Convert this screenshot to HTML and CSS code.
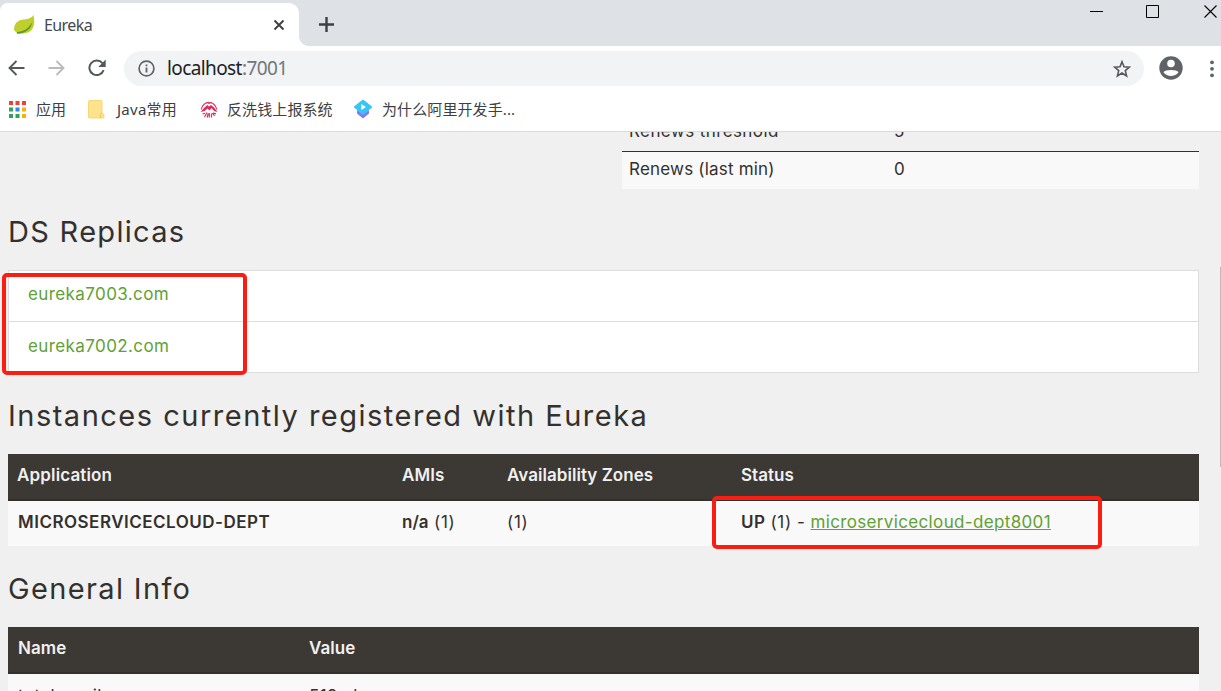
FILE: index.html
```html
<!DOCTYPE html>
<html lang="zh-CN">
<head>
<meta charset="utf-8">
<title>Eureka</title>
<link rel="stylesheet" href="styles.css">
</head>
<body>
<div class="window">
  <header class="tabstrip">
    <div class="tab">
      <svg class="leaf" width="22" height="20" viewBox="0 0 22 20"><path d="M0 15C0 8 4 5 10 4.500C15 4 18 2.500 19.500 0C21 6 20.500 13 16.500 16C13 18.800 6 19 3 18Z" fill="#bfd02c"/><path d="M3 17C9 17 15 13.500 18.500 6.500C17.500 13.500 12 18.500 3 18.800Z" fill="#5a9a32"/></svg>
      <span class="tab-title">Eureka</span>
      <svg class="tab-close" width="12" height="12" viewBox="0 0 12 12"><path d="M1.500 1.500L10.500 10.500M10.500 1.500L1.500 10.500" stroke="#3c4043" stroke-width="1.900"/></svg>
    </div>
    <div class="new-tab">
      <svg width="15" height="15" viewBox="0 0 15 15"><path d="M7.500 0V15M0 7.500H15" stroke="#3c4043" stroke-width="2.400"/></svg>
    </div>
    <div class="controls">
      <svg width="13" height="14" viewBox="0 0 13 14"><path d="M0 6.500H13" stroke="#000"/></svg>
      <svg width="13" height="14" viewBox="0 0 13 14"><path d="M.500 .500H12.500V12.500H.500Z" fill="none" stroke="#000"/></svg>
      <svg class="win-close" width="13" height="14" viewBox="0 0 13 14"><path d="M.500 .500L12.500 12.500M12.500 .500L.500 12.500" stroke="#000" stroke-width="1.100"/></svg>
    </div>
  </header>

  <div class="toolbar">
    <svg class="back" width="17" height="16" viewBox="0 0 17 16"><path d="M16.500 8H2M8.500 1L1.500 8L8.500 15" fill="none" stroke="#54585d" stroke-width="1.900"/></svg>
    <svg class="forward" width="17" height="16" viewBox="0 0 17 16"><path d="M.500 8H15M8.500 1L15.500 8L8.500 15" fill="none" stroke="#b9bbbe" stroke-width="1.900"/></svg>
    <svg class="reload" width="18" height="18" viewBox="0 0 18 18"><path d="M15.600 11.200A7.300 7.300 0 1 1 14.400 4.200" fill="none" stroke="#54585d" stroke-width="2"/><path d="M17.700 .600V8H10.300Z" fill="#54585d"/></svg>
    <div class="omnibox">
      <svg width="17" height="17" viewBox="0 0 17 17"><circle cx="8.500" cy="8.500" r="7.400" fill="none" stroke="#5f6368" stroke-width="1.700"/><path d="M8.500 7.500V12.500M8.500 4.400V6.200" stroke="#5f6368" stroke-width="1.800"/></svg>
      <div class="url"><span class="host">localhost</span>:7001</div>
      <svg class="star" width="18" height="18" viewBox="0 0 18 18"><path d="M9 1.700L11 6.700L16.400 7.100L12.300 10.600L13.600 15.900L9 13L4.400 15.900L5.700 10.600L1.600 7.100L7 6.700Z" fill="none" stroke="#54585d" stroke-width="1.600"/></svg>
    </div>
    <svg class="avatar" width="24" height="24" viewBox="0 0 24 24"><circle cx="12" cy="12" r="11.700" fill="#5f6368"/><circle cx="12" cy="7.500" r="3.800" fill="#fff"/><path d="M4.500 16.200C6 13.300 18 13.300 19.500 16.200C16 21.200 8 21.200 4.500 16.200Z" fill="#fff"/></svg>
    <svg class="menu" width="4" height="18" viewBox="0 0 4 18"><g fill="#5f6368"><circle cx="2" cy="2.300" r="1.900"/><circle cx="2" cy="8.800" r="1.900"/><circle cx="2" cy="15.300" r="1.900"/></g></svg>
  </div>

  <nav class="bookmarks">
    <svg class="apps" width="17" height="17" viewBox="0 0 17 17"><g fill="#ee4135"><path d="M0 0h4v4H0zM6.500 0h4v4h-4zM13 0h4v4h-4z"/></g><path fill="#34a05a" d="M0 6.500h4v4H0zM0 13h4v4H0zM6.500 13h4v4h-4z"/><path fill="#2a85f0" d="M6.500 6.500h4v4h-4z"/><path fill="#fbb00c" d="M13 6.500h4v4h-4zM13 13h4v4h-4z"/></svg>
    <span class="mark mark-apps">应用</span>
    <svg class="folder" width="17" height="19" viewBox="0 0 17 19"><path d="M1.500 .500H13Q14 .500 14 1.500V13Q16.500 13.500 16 18H1.500Q.500 18 .500 17V1.500Q.500 .500 1.500 .500Z" fill="#fde38c" stroke="#f5d876"/><path d="M12.500 18Q11.500 13 14 13" fill="none" stroke="#edc64a"/></svg>
    <span class="mark mark-java">Java常用</span>
    <svg class="seal" width="18" height="18" viewBox="0 0 18 18"><path d="M1.300 9.500A7.800 8.600 0 0 1 16.700 9.500" fill="none" stroke="#dc2c5b" stroke-width="1.200"/><path d="M4 4.200L7 2.800L9 3.800L11 2.800L14 4.200" fill="none" stroke="#e0567b" stroke-width="1"/><path d="M.500 12L4.500 7.500L7.500 5L9 6.500L11 5L14 7.500L17.500 12L14 11L11.500 8L9.500 10.500L7.500 8.500L4.500 11Z" fill="#dc2c5b"/><path d="M4.500 17L7 12.500M7.200 17.500L8.200 13.500M9.300 13V17.500M11.500 17.500V13.500M12.500 13L14.500 16M2.500 14L5 13.200M13 13.200L16 13.800" stroke="#dc2c5b" stroke-width="1.200"/></svg>
    <span class="mark mark-report">反洗钱上报系统</span>
    <svg class="diamond" width="20" height="20" viewBox="0 0 20 20"><path d="M4 11L10 15L16 11V14.500L10 19.500L4 14.500Z" fill="#7d7cf4"/><path d="M10 .500L14 3.500L19.500 8L10 16L.500 8L6 3.500Z" fill="#38c4f5"/><path d="M8.300 5L13 8L8.300 11Z" fill="#fff"/></svg>
    <span class="mark mark-ali">为什么阿里开发手...</span>
  </nav>

  <main class="page">
    <div class="stats">
      <div class="stat-row cut"><span class="threshold">Renews threshold</span><span>5</span></div>
      <div class="stat-row"><span class="last-min">Renews (last min)</span><span>0</span></div>
    </div>

    <h1 class="ds">DS Replicas</h1>
    <div class="replica-wrap">
      <ul class="replicas">
        <li><a>eureka7003.com</a></li>
        <li><a>eureka7002.com</a></li>
      </ul>
      <div class="marker marker-replicas"></div>
    </div>

    <h1 class="instances">Instances currently registered with Eureka</h1>
    <div class="table">
      <div class="row head apps-cols"><b class="t-app">Application</b><b>AMIs</b><b>Availability Zones</b><b>Status</b></div>
      <div class="row apps-cols"><b class="t-name">MICROSERVICECLOUD-DEPT</b><span class="count"><b>n/a</b> (1)</span><span class="count">(1)</span><span><b>UP</b> <span class="count">(1)</span> - <a class="instance">microservicecloud-dept8001</a></span></div>
      <div class="marker marker-status"></div>
    </div>

    <h1 class="general">General Info</h1>
    <div class="table">
      <div class="row head info-cols"><b class="t-info">Name</b><b>Value</b></div>
      <div class="row info-cols last-row"><span>total-avail-memory</span><span>519mb</span></div>
    </div>
    <div class="scroll-thumb"></div>
  </main>
</div>
</body>
</html>
```
FILE: styles.css
```css
* { box-sizing: border-box; }
body { margin: 0; overflow: hidden; font-family: "Inter", "Noto Sans CJK SC", sans-serif; }
svg { display: block; flex: none; }
.window { width: 1221px; height: 691px; display: flex; flex-direction: column; overflow: hidden; background: #fff; }

.tabstrip { height: 46px; flex: none; display: flex; background: linear-gradient(#dee1e6, #dee1e6) right / 922px 100% no-repeat, linear-gradient(#dee1e6 12px, #fff 12px); }
.tab { width: 299px; height: 43px; margin-top: 3px; padding-left: 14px; display: flex; align-items: center; background: #fff; border-radius: 8px 10px 0 0; }
.tab-title { margin-left: 8px; width: 229px; font: 16px/22px "Noto Sans", sans-serif; letter-spacing: -.6px; color: #45494d; }
.new-tab { width: 60px; padding: 17px 0 0 20px; background: radial-gradient(circle at 10px 36px, #dee1e6 10px, #fff 10.5px) left bottom / 10px 10px no-repeat; background: radial-gradient(circle at 100% 0, #dee1e6 9.5px, #fff 10.5px) left bottom / 10px 10px no-repeat; }
.controls { margin-left: auto; display: flex; gap: 43px; padding: 5px 4px 0 0; }
.win-close { margin-left: 2px; }

.toolbar { height: 45px; flex: none; display: flex; align-items: center; padding-left: 8px; }
.back, .forward, .reload { margin-bottom: 1px; }
.forward { margin-left: 23px; }
.reload { margin-left: 23px; }
.omnibox { width: 1020px; height: 35px; margin-left: 18px; padding: 0 13px 0 14px; display: flex; align-items: center; background: #f1f3f4; border-radius: 18px; }
.url { margin: 0 0 2px 12px; flex: 1; font: 19px/26px "Noto Sans", sans-serif; letter-spacing: -.6px; color: #72767a; }
.host { color: #202124; }
.avatar { margin: 0 0 1px 15px; }
.menu { margin-left: 27px; }

.bookmarks { height: 41px; flex: none; display: flex; align-items: center; padding: 0 0 4px 9px; border-bottom: 1px solid #d9dbdd; }
.mark { font: 15px/22px "Noto Sans", "Noto Sans CJK SC", sans-serif; color: #3c4043; white-space: nowrap; }
.mark-apps { margin-left: 10px; width: 52px; }
.mark-java { margin-left: 12px; width: 83px; letter-spacing: .25px; }
.mark-report { margin-left: 9px; width: 126px; letter-spacing: .1px; }
.mark-ali { margin-left: 9px; letter-spacing: .1px; }

.page { position: relative; flex: 1; min-height: 0; overflow: hidden; padding: 0 22px 0 8px; background: #f0f0f0; color: #34302d; font-size: 17px; line-height: 20px; letter-spacing: .4px; }
.stats { margin-left: 614px; }
.stat-row { display: grid; grid-template-columns: 265px 1fr; height: 38px; padding: 7px; border-top: 1px solid #34302d; background: #f9f9f9; }
.stat-row.cut { height: 19px; padding: 0 7px; border: 0; background: none; align-items: end; overflow: hidden; }
.stat-row.cut span { margin-bottom: 10px; }
.last-min { letter-spacing: .2px; }
h1 { margin: 26px 0 21px; font-weight: 400; font-size: 29px; line-height: 34px; white-space: nowrap; }
.ds { letter-spacing: 1.3px; }
.instances { letter-spacing: 1.5px; }
.general { letter-spacing: 1.35px; }
.replica-wrap { position: relative; }
.replicas { margin: 0; padding: 0; list-style: none; border: 1px solid #ddd; background: #fff; }
.replicas li { height: 51px; padding: 13px 19px; }
.replicas li:first-child { border-bottom: 1px solid #ddd; }
.replicas li:last-child { height: 50px; padding-top: 14px; }
a { color: #5fa134; }
.instance { text-decoration: underline; letter-spacing: .35px; }
.table { position: relative; }
.row { display: grid; height: 45px; padding: 11px 9px; background: #f9f9f9; white-space: nowrap; }
.head { height: 47px; color: #f1f1f1; background: #3c3834; border-bottom: 2px solid #34302d; letter-spacing: .05px; }
.t-app { letter-spacing: .15px; }
.t-name { padding-left: 1px; letter-spacing: .5px; }
.count { letter-spacing: .7px; }
.count b { letter-spacing: 0; }
.apps-cols { grid-template-columns: 385px 105px 234px 1fr; }
.info-cols { padding-left: 10px; grid-template-columns: 291px 1fr; }
.last-row { padding-top: 12px; }
b { font-weight: 600; }
.marker { position: absolute; border: 4px solid #fb1d12; border-radius: 5px; }
.marker-replicas { left: -6px; top: 3px; width: 245px; height: 102px; }
.marker-status { left: 704px; top: 42px; width: 390px; height: 53px; }
.scroll-thumb { position: absolute; right: 0; top: 135px; width: 1px; height: 200px; background: #bbb; }

.stat-row.cut { position: relative; align-items: start; }
.stat-row.cut span { margin: -11px 0 0; }
```
